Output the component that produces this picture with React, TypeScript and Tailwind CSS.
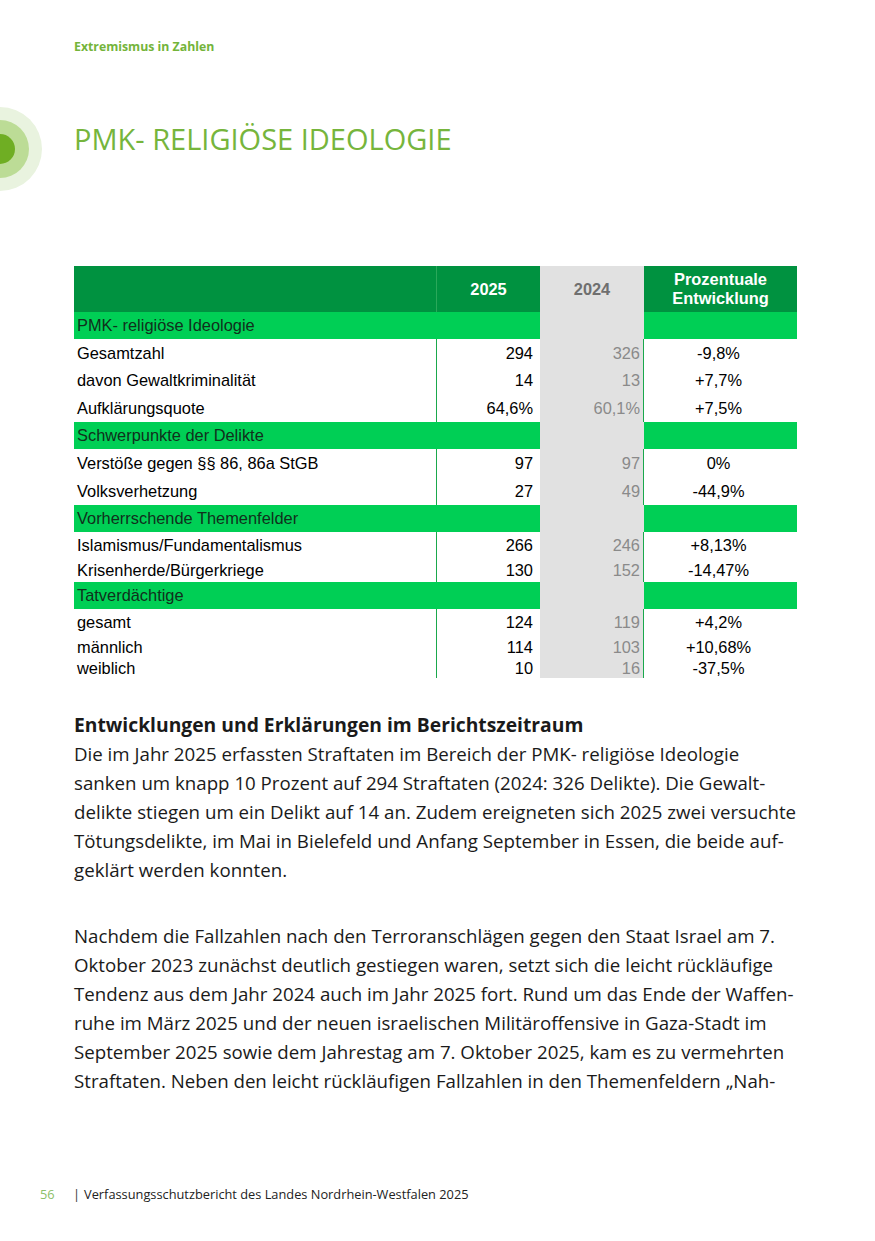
import React from "react";

const sec = "bg-[#00cf55]";
const dark = "bg-[#009240]";

type Row = { label: string; a: string; b: string; c: string; h: string };

function Section({ label }: { label: string }) {
  return (
    <div className="flex h-[27px] items-center">
      <div className={`w-[363px] h-full ${sec} flex items-center pl-[3px] text-[#10301c]`}>{label}</div>
      <div className={`w-[103px] h-full ${sec}`} />
      <div className="w-[104px] h-full bg-[#e1e1e1]" />
      <div className={`w-[153px] h-full ${sec}`} />
    </div>
  );
}

function DataRow({ r }: { r: Row }) {
  return (
    <div className={`flex ${r.h} items-center`}>
      <div className="w-[363px] h-full flex items-center pl-[3px] border-r border-[#1aa84c] text-black">{r.label}</div>
      <div className="w-[103px] h-full flex items-center justify-end pr-[7px] text-black">{r.a}</div>
      <div className="w-[104px] h-full flex items-center justify-end pr-[3px] bg-[#e1e1e1] border-r border-[#1aa84c] text-[#8a8a8a]">{r.b}</div>
      <div className="w-[153px] h-full flex items-center justify-center pr-[4px] text-black">{r.c}</div>
    </div>
  );
}

export default function App() {
  return (
    <div className="relative w-[875px] h-[1241px] bg-white overflow-hidden" style={{ fontFamily: "'Open Sans', sans-serif" }}>
      {/* circle logo */}
      <div className="absolute left-[-42px] top-[107px] w-[84px] h-[84px] rounded-full bg-[#e9f3df] flex items-center justify-center">
        <div className="w-[58px] h-[58px] rounded-full bg-[#bcdc96] flex items-center justify-center">
          <div className="w-[30px] h-[30px] rounded-full bg-[#6fae23]" />
        </div>
      </div>

      <div className="pl-[74px] pt-[38px]">
        <div className="text-[12.3px] font-bold text-[#74b43a] leading-[18px]">Extremismus in Zahlen</div>
        <h1 className="mt-[63px] text-[29px] leading-[40px] text-[#76b53c] font-normal">PMK- RELIGIÖSE IDEOLOGIE</h1>
      </div>

      {/* table */}
      <div className="ml-[74px] mt-[107px] w-[723px] text-[16.4px]" style={{ fontFamily: "'Liberation Sans', Arial, sans-serif" }}>
        <div className="flex h-[46px] font-bold">
          <div className={`w-[363px] h-full ${dark} border-r border-[#2aa85a]`} />
          <div className={`w-[103px] h-full ${dark} flex items-center justify-center text-white`}>2025</div>
          <div className="w-[104px] h-full bg-[#e1e1e1] flex items-center justify-center text-[#6f6f6f]">2024</div>
          <div className={`w-[153px] h-full ${dark} flex flex-col items-center justify-center text-white leading-[19px]`}>
            <span>Prozentuale</span>
            <span>Entwicklung</span>
          </div>
        </div>
        <Section label="PMK- religiöse Ideologie" />
        <DataRow r={{ label: "Gesamtzahl", a: "294", b: "326", c: "-9,8%", h: "h-[28px]" }} />
        <DataRow r={{ label: "davon Gewaltkriminalität", a: "14", b: "13", c: "+7,7%", h: "h-[27px]" }} />
        <DataRow r={{ label: "Aufklärungsquote", a: "64,6%", b: "60,1%", c: "+7,5%", h: "h-[28px]" }} />
        <Section label="Schwerpunkte der Delikte" />
        <DataRow r={{ label: "Verstöße gegen §§ 86, 86a StGB", a: "97", b: "97", c: "0%", h: "h-[28px]" }} />
        <DataRow r={{ label: "Volksverhetzung", a: "27", b: "49", c: "-44,9%", h: "h-[28px]" }} />
        <Section label="Vorherrschende Themenfelder" />
        <DataRow r={{ label: "Islamismus/Fundamentalismus", a: "266", b: "246", c: "+8,13%", h: "h-[26px]" }} />
        <DataRow r={{ label: "Krisenherde/Bürgerkriege", a: "130", b: "152", c: "-14,47%", h: "h-[24px]" }} />
        <Section label="Tatverdächtige" />
        <DataRow r={{ label: "gesamt", a: "124", b: "119", c: "+4,2%", h: "h-[27px]" }} />
        <DataRow r={{ label: "männlich", a: "114", b: "103", c: "+10,68%", h: "h-[22px]" }} />
        <DataRow r={{ label: "weiblich", a: "10", b: "16", c: "-37,5%", h: "h-[20px]" }} />
      </div>

      {/* body text */}
      <div className="ml-[74px] mt-[32px] w-[760px] text-[18.7px] leading-[29px] text-[#1a1a1a]">
        <div className="font-bold text-[19.3px]">Entwicklungen und Erklärungen im Berichtszeitraum</div>
        <p>
          Die im Jahr 2025 erfassten Straftaten im Bereich der PMK- religiöse Ideologie<br />
          sanken um knapp 10 Prozent auf 294 Straftaten (2024: 326 Delikte). Die Gewalt-<br />
          delikte stiegen um ein Delikt auf 14 an. Zudem ereigneten sich 2025 zwei versuchte<br />
          Tötungsdelikte, im Mai in Bielefeld und Anfang September in Essen, die beide auf-<br />
          geklärt werden konnten.
        </p>
        <p className="mt-[37px]">
          Nachdem die Fallzahlen nach den Terroranschlägen gegen den Staat Israel am 7.<br />
          Oktober 2023 zunächst deutlich gestiegen waren, setzt sich die leicht rückläufige<br />
          Tendenz aus dem Jahr 2024 auch im Jahr 2025 fort. Rund um das Ende der Waffen-<br />
          ruhe im März 2025 und der neuen israelischen Militäroffensive in Gaza-Stadt im<br />
          September 2025 sowie dem Jahrestag am 7. Oktober 2025, kam es zu vermehrten<br />
          Straftaten. Neben den leicht rückläufigen Fallzahlen in den Themenfeldern „Nah-
        </p>
      </div>

      {/* footer */}
      <div className="absolute left-[40px] top-[1185px] flex items-center text-[12.8px] leading-[18px]">
        <span className="text-[#8cc06a] w-[33px]">56</span>
        <span className="text-[#333] mr-[4px]">|</span>
        <span className="text-[#222]">Verfassungsschutzbericht des Landes Nordrhein-Westfalen 2025</span>
      </div>
    </div>
  );
}
